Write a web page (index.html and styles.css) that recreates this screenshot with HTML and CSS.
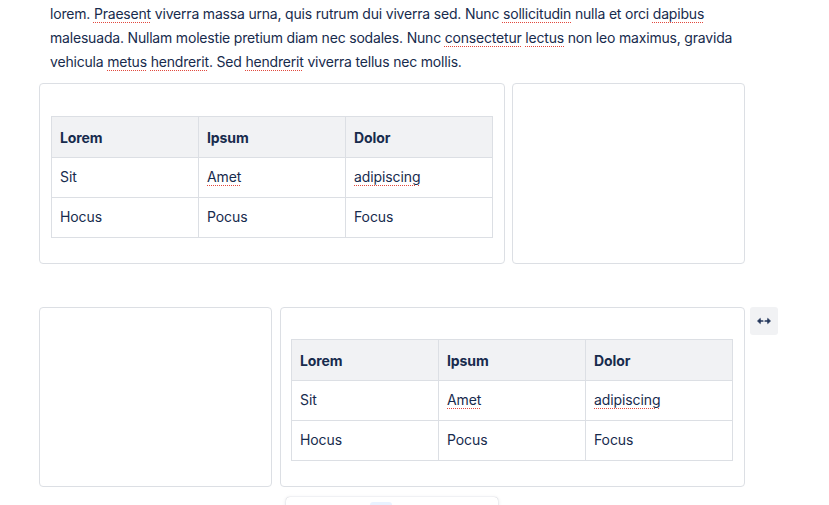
FILE: index.html
```html
<!DOCTYPE html>
<html>
<head>
<meta charset="utf-8">
<link rel="stylesheet" href="styles.css">
</head>
<body>
<div class="page">
  <p class="para">lorem. <span class="sp">Praesent</span> viverra massa urna, quis rutrum dui viverra sed. Nunc <span class="sp">sollicitudin</span> nulla et orci <span class="sp">dapibus</span><br>malesuada. Nullam molestie pretium diam nec sodales. Nunc <span class="sp">consectetur</span> <span class="sp">lectus</span> non leo maximus, gravida<br>vehicula <span class="sp">metus</span> <span class="sp">hendrerit</span>. Sed <span class="sp">hendrerit</span> viverra tellus nec mollis.</p>

  <div class="row row-a">
    <div class="card card-wide">
      <table class="tbl">
        <tr><th>Lorem</th><th>Ipsum</th><th>Dolor</th></tr>
        <tr><td>Sit</td><td><span class="sp">Amet</span></td><td><span class="sp">adipiscing</span></td></tr>
        <tr><td>Hocus</td><td>Pocus</td><td>Focus</td></tr>
      </table>
    </div>
    <div class="card card-narrow"></div>
  </div>

  <div class="row row-b">
    <div class="card card-narrow"></div>
    <div class="card card-wide2">
      <table class="tbl">
        <tr><th>Lorem</th><th>Ipsum</th><th>Dolor</th></tr>
        <tr><td>Sit</td><td><span class="sp">Amet</span></td><td><span class="sp">adipiscing</span></td></tr>
        <tr><td>Hocus</td><td>Pocus</td><td>Focus</td></tr>
      </table>
    </div>
    <button class="swap" aria-label="Swap">
      <svg width="16" height="16" viewBox="0 0 16 16" fill="#22355a" stroke="#22355a" stroke-linejoin="round">
        <path d="M3.5 8h3.2" fill="none" stroke-width="1.7" stroke-linecap="round"/>
        <path d="M1.5 8l2.8-2.6v5.2z" stroke-width="0.8"/>
        <path d="M9.3 8h3.2" fill="none" stroke-width="1.7" stroke-linecap="round"/>
        <path d="M14.5 8l-2.8-2.6v5.2z" stroke-width="0.8"/>
      </svg>
    </button>
  </div>

  <div class="toolbar">
    <span class="tb-active"></span>
    <span class="tb-sep"></span>
    <span class="tb-box"></span>
    <span class="tb-sep"></span>
  </div>
</div>
</body>
</html>
```
FILE: styles.css
```css
html, body {
  margin: 0;
  padding: 0;
  background: #ffffff;
}
body {
  font-family: "Inter", "Noto Sans", sans-serif;
  color: #172b4d;
  font-size: 14px;
  width: 829px;
  height: 505px;
  overflow: hidden;
}
.page {
  position: relative;
  padding: 2px 0 0 39px;
}
.para {
  margin: 0;
  padding-left: 11px;
  line-height: 24px;
  font-size: 14px;
  letter-spacing: -0.19px;
  white-space: nowrap;
}
.sp {
  text-decoration: underline dotted #e2483d;
  text-decoration-thickness: 1px;
  text-underline-offset: 3px;
}
.row {
  display: flex;
  align-items: flex-start;
}
.row-a {
  margin-top: 9px;
  gap: 7px;
}
.row-b {
  margin-top: 43px;
  gap: 8px;
}
.card {
  box-sizing: border-box;
  border: 1px solid #dcdfe4;
  border-radius: 4px;
  height: 181px;
  padding: 32px 11px 0 11px;
  background: #fff;
}
.row-b .card {
  height: 180px;
  padding-top: 31px;
}
.card-wide { width: 466px; }
.card-wide2 { width: 465px; padding-left: 10px; }
.card-narrow { width: 233px; }

.tbl {
  border-collapse: collapse;
  table-layout: fixed;
  width: 442px;
}
.tbl th, .tbl td {
  border: 1px solid #dcdfe4;
  text-align: left;
  line-height: 24px;
  font-size: 14px;
  letter-spacing: -0.1px;
}
.tbl th {
  background: #f1f2f4;
  font-weight: 700;
  padding: 9px 8px 7px;
}
.tbl td {
  padding: 7px 8px 8px;
}
.swap {
  margin-left: -3px;
  width: 28px;
  height: 28px;
  border: none;
  border-radius: 3px;
  background: #f1f2f4;
  padding: 0;
  display: flex;
  align-items: center;
  justify-content: center;
}
.toolbar {
  position: absolute;
  left: 286px;
  top: 497px;
  width: 212px;
  height: 40px;
  box-sizing: border-box;
  border-radius: 4px;
  background: #fff;
  box-shadow: 0 0 1px rgba(9,30,66,0.31), 0 1px 4px rgba(9,30,66,0.12);
  display: flex;
  align-items: flex-start;
  padding: 5px 0 0 84px;
}
.tb-active {
  width: 22px;
  height: 24px;
  border-radius: 3px;
  background: #e9f2ff;
}
.tb-sep {
  width: 1px;
  height: 20px;
  background: #c1c7d0;
  margin: 6px 0 0 32px;
}
.tb-box {
  width: 8px;
  height: 10px;
  margin: 7px 0 0 22px;
  background: #b3b9c4;
  border-radius: 1px;
}
.tb-box + .tb-sep {
  margin-left: 7px;
}
```
